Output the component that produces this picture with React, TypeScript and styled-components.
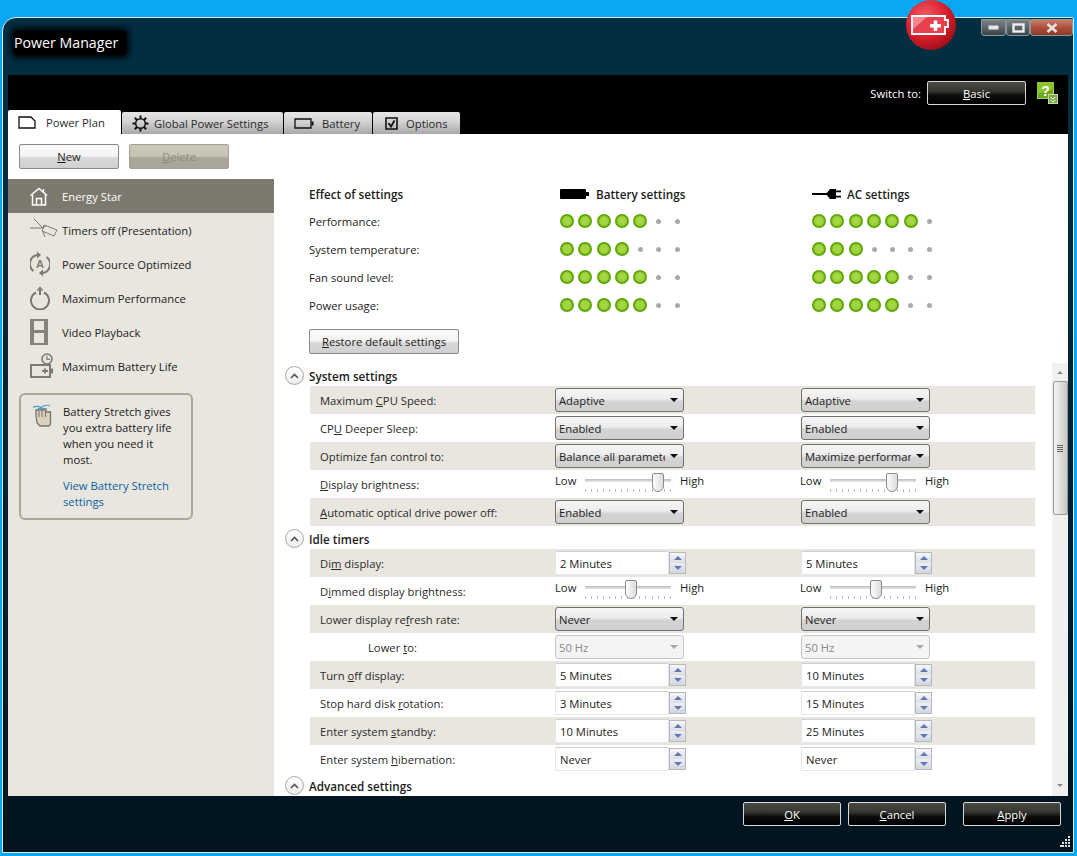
import { Fragment, ReactNode } from 'react'
import styled, { createGlobalStyle } from 'styled-components'

const GlobalStyle = createGlobalStyle`
  html, body {
    margin: 0;
    height: 100%;
    overflow: hidden;
    background: #08a8f2;
  }
  body {
    font-family: 'Open Sans', 'Noto Sans', sans-serif;
    font-size: 11.25px;
    color: #1c1c1c;
  }
  * {
    box-sizing: border-box;
  }
`

const Desktop = styled.div`
  width: 1077px;
  height: 856px;
  padding: 17px 3px 3px 2px;
  position: relative;
`

const Window = styled.div`
  height: 100%;
  display: flex;
  flex-direction: column;
  padding: 0 5px;
  border: 1px solid #dbe9ef;
  border-radius: 14px 2px 0 0;
  background: linear-gradient(#022e42 0, #022e42 58px, #02202f 62%, #02131d 100%);
`

const TitleBar = styled.div`
  height: 57px;
  flex: none;
  display: flex;
  justify-content: space-between;
  align-items: flex-start;
`

const Title = styled.div`
  margin: 13px 0 0 6px;
  font-size: 14.2px;
  line-height: 20px;
  color: #fff;
  background: #000;
  padding: 2px 8px 2px 0;
  box-shadow: 0 0 6px 3px #000;
  border-radius: 3px;
`

const Controls = styled.div`
  display: flex;
  margin: 1px -5px 0 0;
`

const ControlButton = styled.div<{ $close?: boolean; $w: number }>`
  width: ${(p) => p.$w}px;
  height: 17px;
  display: flex;
  align-items: center;
  justify-content: center;
  border: 1px solid #8b979d;
  border-radius: 0 0 3px 3px;
  background: ${(p) =>
    p.$close
      ? 'linear-gradient(#c77d6d 0, #b0503b 50%, #8c3a28 100%)'
      : 'linear-gradient(#7b8489 0, #5b6569 50%, #39444a 100%)'};
`

const Orb = styled.div`
  position: absolute;
  left: 906px;
  top: 0;
  width: 50px;
  height: 50px;
`

const BlackBand = styled.div`
  height: 59px;
  flex: none;
  background: #000;
  display: flex;
  flex-direction: column;
  justify-content: space-between;
`

const SwitchRow = styled.div`
  display: flex;
  align-items: center;
  justify-content: flex-end;
  padding: 6px 10px 0 0;
  color: #fff;
`

const SwitchLabel = styled.span`
  margin-right: 6px;
`

const DarkButton = styled.div<{ $gapLeft?: number; $w: number }>`
  width: ${(p) => p.$w}px;
  height: 24px;
  margin-left: ${(p) => p.$gapLeft ?? 0}px;
  display: flex;
  align-items: center;
  justify-content: center;
  color: #fff;
  border: 1px solid #d7d9da;
  border-radius: 2px;
  background: linear-gradient(#4a4a44 0, #383833 40%, #0b0b0a 62%, #000 100%);
`

const HelpIcon = styled.div`
  margin-left: 11px;
  width: 21px;
  height: 22px;
`

const TabRow = styled.div`
  display: flex;
  align-items: flex-end;
  height: 24px;
`

const Tab = styled.div<{ $active?: boolean; $w: number; $pad: number; $gap: number }>`
  width: ${(p) => p.$w}px;
  height: ${(p) => (p.$active ? 24 : 22)}px;
  margin-right: 1px;
  display: flex;
  align-items: center;
  gap: ${(p) => p.$gap}px;
  padding-left: ${(p) => p.$pad}px;
  color: #2b2b2b;
  background: ${(p) => (p.$active ? '#fff' : 'linear-gradient(#e6e6e6 0, #d2d2d2 45%, #a8a8a8 100%)')};
  border-radius: 2px 2px 0 0;
`

const Panel = styled.div`
  flex: 1;
  min-height: 0;
  background: #fff;
  display: flex;
  flex-direction: column;
  overflow: hidden;
`

const Toolbar = styled.div`
  height: 45px;
  flex: none;
  padding: 10px 0 0 11px;
  display: flex;
  gap: 10px;
`

const LightButton = styled.div<{ $w: number; $disabled?: boolean }>`
  width: ${(p) => p.$w}px;
  height: 25px;
  display: flex;
  align-items: center;
  justify-content: center;
  border: 1px solid ${(p) => (p.$disabled ? '#a5a294' : '#8a8a8a')};
  border-radius: 2px;
  color: ${(p) => (p.$disabled ? '#8c8a7e' : '#1c1c1c')};
  background: ${(p) =>
    p.$disabled
      ? 'linear-gradient(#cbc8ba 0, #c7c4b6 48%, #a9a699 56%, #a9a699 100%)'
      : 'linear-gradient(#fbfbfb 0, #f4f4f4 48%, #d8d8d8 56%, #d0d0d0 100%)'};
`

const PanelBody = styled.div`
  flex: 1;
  min-height: 0;
  display: grid;
  grid-template-columns: 266px 1fr;
`

const Sidebar = styled.div`
  background: #e9e6df;
`

const PlanItem = styled.div<{ $active?: boolean }>`
  height: 34px;
  display: flex;
  align-items: center;
  padding-left: 22px;
  background: ${(p) => (p.$active ? '#7c796e' : 'transparent')};
  color: ${(p) => (p.$active ? '#fff' : '#1c1c1c')};
`

const PlanIcon = styled.div`
  width: 32px;
  height: 30px;
  flex: none;
  display: flex;
  align-items: center;
`

const StretchCard = styled.div`
  margin: 10px 0 0 11px;
  width: 174px;
  height: 127px;
  border: 2px solid #aaa796;
  border-radius: 6px;
  padding: 9px 10px 0 12px;
  display: flex;
  gap: 10px;
  line-height: 16px;
`

const StretchIcon = styled.div`
  width: 20px;
  flex: none;
`

const StretchLink = styled.div`
  margin-top: 10px;
  color: #0b5fa5;
`

const Main = styled.div`
  display: flex;
  flex-direction: column;
  min-height: 0;
`

const Effects = styled.div`
  height: 184px;
  flex: none;
  padding: 1px 0 0 35px;
`

const EffectRow = styled.div<{ $head?: boolean }>`
  height: ${(p) => (p.$head ? 27 : 28)}px;
  display: grid;
  grid-template-columns: 251px 252px 1fr;
  align-items: center;
`

const EffectHead = styled.div`
  display: flex;
  align-items: center;
  gap: 6px;
  font-size: 11.7px;
  font-weight: 600;
`

const Dots = styled.div`
  display: flex;
  margin-left: -2px;
`

const DotCell = styled.div`
  width: 18.33px;
  height: 14px;
  display: flex;
  align-items: center;
  justify-content: center;
`

const Dot = styled.div<{ $on: boolean }>`
  width: ${(p) => (p.$on ? 14 : 5)}px;
  height: ${(p) => (p.$on ? 14 : 5)}px;
  border-radius: 50%;
  background: ${(p) =>
    p.$on ? 'radial-gradient(circle at 50% 50%, #a8d84a 0, #a0d23c 42%, #5fa806 58%, #529c00 82%, #8cc25a 100%)' : '#a9aaa8'};
`

const RestoreRow = styled.div`
  margin-top: 10px;
`

const ScrollArea = styled.div`
  flex: 1;
  min-height: 0;
  display: grid;
  grid-template-columns: 1fr 16px;
  overflow: hidden;
`

const SettingsList = styled.div`
  padding-left: 11px;
  overflow: hidden;
`

const SectionHead = styled.div`
  height: 23px;
  padding-top: 2px;
  display: flex;
  align-items: center;
  gap: 5px;
  font-size: 11.7px;
  font-weight: 600;
`

const CollapseIcon = styled.div`
  width: 19px;
  height: 19px;
  display: flex;
  align-items: center;
  justify-content: center;
  border: 1px solid #a8a8a8;
  border-radius: 50%;
  background: linear-gradient(#fff, #ececec);
`

const SettingRow = styled.div<{ $shade: boolean }>`
  margin: 0 0 0 25px;
  width: 725px;
  height: 28px;
  display: grid;
  grid-template-columns: 245px 246px 1fr;
  align-items: center;
  background: ${(p) => (p.$shade ? '#e9e6df' : 'transparent')};
`

const SettingLabel = styled.div<{ $indent?: boolean }>`
  padding-left: ${(p) => (p.$indent ? 58 : 10)}px;
  color: #2a2a2a;
`

const Select = styled.div<{ $disabled?: boolean }>`
  width: 129px;
  height: 24px;
  display: flex;
  align-items: center;
  padding: 0 5px 0 3px;
  border: 1px solid ${(p) => (p.$disabled ? '#c4c4c4' : '#70706c')};
  border-radius: 3px;
  color: ${(p) => (p.$disabled ? '#8a8a8a' : '#1c1c1c')};
  background: ${(p) => (p.$disabled ? '#f4f4f4' : 'linear-gradient(#f6f6f6 0, #ececec 45%, #d4d4d4 56%, #cfcfcf 100%)')};
`

const SelectText = styled.span`
  flex: 1;
  min-width: 0;
  overflow: hidden;
  white-space: nowrap;
`

const Caret = styled.span<{ $disabled?: boolean }>`
  flex: none;
  margin-left: 5px;
  width: 0;
  height: 0;
  border-left: 4px solid transparent;
  border-right: 4px solid transparent;
  border-top: 4px solid ${(p) => (p.$disabled ? '#a8a8a8' : '#111')};
`

const Spinner = styled.div`
  display: flex;
  height: 24px;
  width: 131px;
`

const SpinInput = styled.div`
  width: 114px;
  height: 24px;
  display: flex;
  align-items: center;
  padding-left: 4px;
  background: #fff;
  border: 1px solid #e3e6ea;
  border-top-color: #cdd0d4;
`

const SpinButtons = styled.div`
  width: 17px;
  display: flex;
  flex-direction: column;
  border: 1px solid #b4b8c0;
  height: 22px;
  margin-top: 1px;
`

const SpinPart = styled.div<{ $up?: boolean }>`
  flex: 1;
  display: flex;
  align-items: center;
  justify-content: center;
  background: ${(p) => (p.$up ? 'linear-gradient(#f6f6f8, #dcdee4)' : 'linear-gradient(#eceef2, #d4d6de)')};
  &::after {
    content: '';
    width: 0;
    height: 0;
    border-left: 4px solid transparent;
    border-right: 4px solid transparent;
    ${(p) => (p.$up ? 'border-bottom: 4px solid #6078b8;' : 'border-top: 4px solid #6078b8;')}
  }
`

const SliderWrap = styled.div<{ $shift?: boolean }>`
  display: flex;
  align-items: flex-start;
  height: 28px;
  padding-top: 3px;
  margin-left: ${(p) => (p.$shift ? -1 : 0)}px;
  line-height: 16px;
`

const SliderEnd = styled.span`
  width: 30px;
  flex: none;
`

const SliderTrack = styled.div`
  position: relative;
  width: 86px;
  height: 22px;
  margin-right: 9px;
`

const TrackLine = styled.div`
  position: absolute;
  top: 6px;
  left: 0;
  right: 0;
  height: 3px;
  background: linear-gradient(#bdbdbd, #e6e6e6);
`

const Ticks = styled.div`
  position: absolute;
  top: 16px;
  left: 0;
  right: 0;
  height: 3px;
  background: repeating-linear-gradient(to right, #b8b8b8 0 1px, transparent 1px 6.05px);
`

const Thumb = styled.div<{ $left: number }>`
  position: absolute;
  top: 0;
  left: ${(p) => p.$left}px;
  width: 12px;
  height: 19px;
  border: 1px solid #8c8c8c;
  border-radius: 2px 2px 6px 6px;
  background: linear-gradient(to right, #fdfdfd, #dcdcdc);
`

const Scrollbar = styled.div`
  background: #f0f0f0;
  display: flex;
  flex-direction: column;
  align-items: center;
  position: relative;
`

const ScrollArrow = styled.div<{ $down?: boolean }>`
  flex: none;
  height: 18px;
  display: flex;
  align-items: center;
  justify-content: center;
  margin-top: ${(p) => (p.$down ? 'auto' : '0')};
  padding-bottom: ${(p) => (p.$down ? '4px' : '0')};
  &::after {
    content: '';
    width: 0;
    height: 0;
    border-left: 3px solid transparent;
    border-right: 3px solid transparent;
    ${(p) => (p.$down ? 'border-top: 3px solid #8c8c8c;' : 'border-bottom: 3px solid #8c8c8c;')}
  }
`

const ScrollThumb = styled.div`
  width: 15px;
  height: 134px;
  flex: none;
  border: 1px solid #9a9a9a;
  border-radius: 2px;
  background: linear-gradient(to right, #f4f4f4, #dedede 50%, #c8c8c8);
  display: flex;
  flex-direction: column;
  align-items: center;
  justify-content: center;
  gap: 1px;
`

const GripLine = styled.div`
  width: 6px;
  height: 1px;
  background: #666;
`

const Footer = styled.div`
  height: 56px;
  flex: none;
  padding: 6px 7px 0 0;
  display: flex;
  justify-content: flex-end;
  position: relative;
`

const ResizeGrip = styled.div`
  position: absolute;
  right: -3px;
  bottom: 2px;
`

const Key = styled.span`
  text-decoration: underline;
`

type Setting =
  | { kind: 'select'; label: ReactNode; a: string; b: string; indent?: boolean; disabled?: boolean }
  | { kind: 'slider'; label: ReactNode; a: number; b: number }
  | { kind: 'spin'; label: ReactNode; a: string; b: string }

const systemSettings: Setting[] = [
  { kind: 'select', label: <>Maximum <Key>C</Key>PU Speed:</>, a: 'Adaptive', b: 'Adaptive' },
  { kind: 'select', label: <>CP<Key>U</Key> Deeper Sleep:</>, a: 'Enabled', b: 'Enabled' },
  { kind: 'select', label: <>Optimize <Key>f</Key>an control to:</>, a: 'Balance all parameters', b: 'Maximize performance' },
  { kind: 'slider', label: <><Key>D</Key>isplay brightness:</>, a: 67, b: 56 },
  { kind: 'select', label: <><Key>A</Key>utomatic optical drive power off:</>, a: 'Enabled', b: 'Enabled' },
]

const idleSettings: Setting[] = [
  { kind: 'spin', label: <>Di<Key>m</Key> display:</>, a: '2 Minutes', b: '5 Minutes' },
  { kind: 'slider', label: <>D<Key>i</Key>mmed display brightness:</>, a: 40, b: 40 },
  { kind: 'select', label: <>Lower display re<Key>f</Key>resh rate:</>, a: 'Never', b: 'Never' },
  { kind: 'select', label: <>Lower <Key>t</Key>o:</>, a: '50 Hz', b: '50 Hz', indent: true, disabled: true },
  { kind: 'spin', label: <>Turn <Key>o</Key>ff display:</>, a: '5 Minutes', b: '10 Minutes' },
  { kind: 'spin', label: <>Stop hard disk <Key>r</Key>otation:</>, a: '3 Minutes', b: '15 Minutes' },
  { kind: 'spin', label: <>Enter system <Key>s</Key>tandby:</>, a: '10 Minutes', b: '25 Minutes' },
  { kind: 'spin', label: <>Enter system <Key>h</Key>ibernation:</>, a: 'Never', b: 'Never' },
]

const effects = [
  { label: 'Performance:', battery: 5, ac: 6 },
  { label: 'System temperature:', battery: 4, ac: 3 },
  { label: 'Fan sound level:', battery: 5, ac: 5 },
  { label: 'Power usage:', battery: 5, ac: 5 },
]

const stroke = { fill: 'none', stroke: '#7d7a70', strokeWidth: 2 }

const plans: { name: string; icon: ReactNode }[] = [
  {
    name: 'Energy Star',
    icon: (
      <svg width="18" height="19" viewBox="0 0 18 19" fill="none" stroke="#fff" strokeWidth="1.5">
        <path d="M0.5 8.500 9 1.500l8 7" />
        <path d="M2.500 7.500V18h13V7.500" />
        <path d="M6.500 18v-6.500h5V18" />
        <path d="M13.500 2v3" />
      </svg>
    ),
  },
  {
    name: 'Timers off (Presentation)',
    icon: (
      <svg width="28" height="22" viewBox="0 0 28 22" fill="none" stroke="#7d7a70" strokeWidth="1">
        <path d="M0 9h11l5-2" />
        <path d="M4 0l10 10" />
        <path d="M14 6l13 5-3 6-12-5z" />
        <path d="M13 13l2 5" />
      </svg>
    ),
  },
  {
    name: 'Power Source Optimized',
    icon: (
      <svg width="20" height="26" viewBox="0 0 20 26">
        <path d="M7 4A9 9 0 0 0 3.500 20" {...stroke} />
        <path d="M13 22A9 9 0 0 0 16.500 6" {...stroke} />
        <path d="M7 0.500 11 4 7 7.500z" fill="#7d7a70" />
        <path d="M13 25.500 9 22l4-3.500z" fill="#7d7a70" />
        <text x="10" y="17" textAnchor="middle" fontSize="11" fontWeight="700" fill="#7d7a70" fontFamily="Liberation Sans, sans-serif">A</text>
      </svg>
    ),
  },
  {
    name: 'Maximum Performance',
    icon: (
      <svg width="20" height="24" viewBox="0 0 20 24">
        <path d="M6 6.500a9 9 0 1 0 8 0" {...stroke} />
        <path d="M10 9V4" {...stroke} />
        <path d="M6.500 4.500 10 0.500l3.500 4z" fill="#7d7a70" />
      </svg>
    ),
  },
  {
    name: 'Video Playback',
    icon: (
      <svg width="18" height="26" viewBox="0 0 18 26">
        <path d="M0 0h18v26H0z" fill="#85827a" />
        <path d="M4 2h10v9H4zM4 14h10v10H4z" fill="#e9e6df" />
      </svg>
    ),
  },
  {
    name: 'Maximum Battery Life',
    icon: (
      <svg width="24" height="26" viewBox="0 0 24 26">
        <path d="M1 12h19v12H1z" {...stroke} />
        <path d="M20.500 15.500h2.500v5h-2.500z" fill="#7d7a70" />
        <path d="M12 18h6M15 15.500v5" {...stroke} />
        <circle cx="17" cy="6" r="5" fill="#e9e6df" stroke="#7d7a70" strokeWidth="1.6" />
        <path d="M17 3v3.300h3" {...stroke} strokeWidth={1.2} />
      </svg>
    ),
  },
]

function DotRow({ on }: { on: number }) {
  return (
    <Dots>
      {Array.from({ length: 7 }, (_, i) => (
        <DotCell key={i}>
          <Dot $on={i < on} />
        </DotCell>
      ))}
    </Dots>
  )
}

function Slider({ value, shift }: { value: number; shift: boolean }) {
  return (
    <SliderWrap $shift={shift}>
      <SliderEnd>Low</SliderEnd>
      <SliderTrack>
        <TrackLine />
        <Ticks />
        <Thumb $left={value} />
      </SliderTrack>
      <SliderEnd>High</SliderEnd>
    </SliderWrap>
  )
}

function Drop({ value, disabled }: { value: string; disabled?: boolean }) {
  return (
    <Select $disabled={disabled}>
      <SelectText>{value}</SelectText>
      <Caret $disabled={disabled} />
    </Select>
  )
}

function Spin({ value }: { value: string }) {
  return (
    <Spinner>
      <SpinInput>{value}</SpinInput>
      <SpinButtons>
        <SpinPart $up />
        <SpinPart />
      </SpinButtons>
    </Spinner>
  )
}

function SettingCell({ setting, side }: { setting: Setting; side: 'a' | 'b' }) {
  if (setting.kind === 'slider') return <Slider value={setting[side]} shift={side === 'b'} />
  if (setting.kind === 'spin') return <Spin value={setting[side]} />
  return <Drop value={setting[side]} disabled={setting.disabled} />
}

function SectionTitle({ title }: { title: string }) {
  return (
    <SectionHead>
      <CollapseIcon>
        <svg width="9" height="6" viewBox="0 0 9 6" fill="none" stroke="#555" strokeWidth="1.6">
          <path d="M1 5 4.500 1.500 8 5" />
        </svg>
      </CollapseIcon>
      {title}
    </SectionHead>
  )
}

function Section({ title, settings }: { title: string; settings: Setting[] }) {
  return (
    <Fragment>
      <SectionTitle title={title} />
      {settings.map((s, i) => (
        <SettingRow key={i} $shade={i % 2 === 0}>
          <SettingLabel $indent={s.kind === 'select' && s.indent}>{s.label}</SettingLabel>
          <SettingCell setting={s} side="a" />
          <SettingCell setting={s} side="b" />
        </SettingRow>
      ))}
    </Fragment>
  )
}

export default function App() {
  return (
    <Desktop>
      <GlobalStyle />
      <Window>
        <TitleBar>
          <Title>Power Manager</Title>
          <Controls>
            <ControlButton $w={25}>
              <svg width="11" height="5"><rect x="0.5" y="0.5" width="10" height="4" fill="#e8e8e8" /></svg>
            </ControlButton>
            <ControlButton $w={24}>
              <svg width="13" height="10" fill="none"><rect x="1.500" y="1.500" width="10" height="7" stroke="#eee" strokeWidth="2.400" /></svg>
            </ControlButton>
            <ControlButton $w={43} $close>
              <svg width="12" height="10" fill="none" stroke="#e9e3e0" strokeWidth="2.600"><path d="M1.500 1 10.500 9M10.500 1 1.500 9" /></svg>
            </ControlButton>
          </Controls>
        </TitleBar>
        <BlackBand>
          <SwitchRow>
            <SwitchLabel>Switch to:</SwitchLabel>
            <DarkButton $w={99}><span><Key>B</Key>asic</span></DarkButton>
            <HelpIcon>
              <svg width="21" height="22" viewBox="0 0 21 22">
                <rect x="0.5" y="0.5" width="16" height="16" fill="#6fa816" stroke="#a8c880" />
                <path d="M0 0h17v7L0 12z" fill="#8fc32a" />
                <text x="8.500" y="14" textAnchor="middle" fontSize="14" fontWeight="700" fill="#fff" fontFamily="Liberation Sans, sans-serif">?</text>
                <rect x="11.500" y="12.500" width="9" height="9" fill="#7aa83a" stroke="#c8d8b0" />
                <path d="M13.500 15l2.500 2 2.500-2M13.500 18l2.500 2 2.500-2" fill="none" stroke="#fff" strokeWidth="1" />
              </svg>
            </HelpIcon>
          </SwitchRow>
          <TabRow>
            <Tab $active $w={113} $pad={10} $gap={10}>
              <svg width="18" height="13" viewBox="0 0 18 13" fill="none" stroke="#111" strokeWidth="1.300">
                <path d="M1 1h12l4 4v7H1z" />
              </svg>
              Power Plan
            </Tab>
            <Tab $w={161} $pad={10} $gap={5}>
              <svg width="17" height="17" viewBox="0 0 17 17" fill="none" stroke="#111">
                <circle cx="8.500" cy="8.500" r="4.800" strokeWidth="1.500" />
                <path d="M8.500 0.500v3M8.500 13.500v3M0.500 8.500h3M13.500 8.500h3M2.800 2.800l2.200 2.200M12 12l2.200 2.200M2.800 14.200 5 12M12 5l2.200-2.200" strokeWidth="2" />
              </svg>
              Global Power Settings
            </Tab>
            <Tab $w={88} $pad={10} $gap={8}>
              <svg width="20" height="11" viewBox="0 0 20 11" fill="none" stroke="#111" strokeWidth="1.300">
                <path d="M1 1h16v9H1z" />
                <path d="M18.500 3.500v4" strokeWidth="2" />
              </svg>
              Battery
            </Tab>
            <Tab $w={87} $pad={12} $gap={8}>
              <svg width="13" height="13" viewBox="0 0 13 13" fill="none" stroke="#111">
                <path d="M1 1h11v11H1z" strokeWidth="1.600" />
                <path d="M3.500 6 6 9.500l3.500-6" strokeWidth="1.800" />
              </svg>
              Options
            </Tab>
          </TabRow>
        </BlackBand>
        <Panel>
          <Toolbar>
            <LightButton $w={100}><span><Key>N</Key>ew</span></LightButton>
            <LightButton $w={100} $disabled><span><Key>D</Key>elete</span></LightButton>
          </Toolbar>
          <PanelBody>
            <Sidebar>
              {plans.map((p, i) => (
                <PlanItem key={p.name} $active={i === 0}>
                  <PlanIcon>{p.icon}</PlanIcon>
                  {p.name}
                </PlanItem>
              ))}
              <StretchCard>
                <StretchIcon>
                  <svg width="20" height="25" viewBox="0 0 20 25">
                    <path d="M3 12V6h2.500v-1h2.500v1h2.500v-1h2.500v3h4.500v12l-1.500 2H7l-3-3z" fill="#d8d0b8" stroke="#77746a" strokeWidth="1.300" />
                    <path d="M6 6v7M9 6v7M12.500 7v6" stroke="#77746a" strokeWidth="1" />
                    <path d="M0 3.500c3-2 6-1 8 0 2-2 7-3 9-1.500M8 3.500l-4 3M8 3.500l4 3" fill="none" stroke="#4a9ccc" strokeWidth="1.100" />
                  </svg>
                </StretchIcon>
                <div>
                  Battery Stretch gives you extra battery life when you need it most.
                  <StretchLink>View Battery Stretch settings</StretchLink>
                </div>
              </StretchCard>
            </Sidebar>
            <Main>
              <Effects>
                <EffectRow $head>
                  <EffectHead>Effect of settings</EffectHead>
                  <EffectHead>
                    <svg width="30" height="10" viewBox="0 0 30 10">
                      <path d="M1 0h24q1 0 1 1v8q0 1-1 1H1q-1 0-1-1V1q0-1 1-1zM26 3h3v4h-3z" fill="#000" />
                    </svg>
                    Battery settings
                  </EffectHead>
                  <EffectHead>
                    <svg width="29" height="12" viewBox="0 0 29 12">
                      <path d="M0 5h15v2H0zM14 6l4-5h6v10h-6zM24 2.500h5v1.800h-5zM24 7.700h5v1.800h-5z" fill="#000" />
                    </svg>
                    AC settings
                  </EffectHead>
                </EffectRow>
                {effects.map((e) => (
                  <EffectRow key={e.label}>
                    <span>{e.label}</span>
                    <DotRow on={e.battery} />
                    <DotRow on={e.ac} />
                  </EffectRow>
                ))}
                <RestoreRow>
                  <LightButton $w={150}><span><Key>R</Key>estore default settings</span></LightButton>
                </RestoreRow>
              </Effects>
              <ScrollArea>
                <SettingsList>
                  <Section title="System settings" settings={systemSettings} />
                  <Section title="Idle timers" settings={idleSettings} />
                  <SectionTitle title="Advanced settings" />
                </SettingsList>
                <Scrollbar>
                  <ScrollArrow />
                  <ScrollThumb>
                    <GripLine />
                    <GripLine />
                    <GripLine />
                    <GripLine />
                  </ScrollThumb>
                  <ScrollArrow $down />
                </Scrollbar>
              </ScrollArea>
            </Main>
          </PanelBody>
        </Panel>
        <Footer>
          <DarkButton $w={98}><span><Key>O</Key>K</span></DarkButton>
          <DarkButton $w={98} $gapLeft={7}><span><Key>C</Key>ancel</span></DarkButton>
          <DarkButton $w={98} $gapLeft={17}><span><Key>A</Key>pply</span></DarkButton>
          <ResizeGrip>
            <svg width="11" height="11" fill="#d8e0e4">
              {[[8, 0], [8, 3], [5, 3], [8, 6], [5, 6], [2, 6], [8, 9], [5, 9], [2, 9], [0, 9]].map(([x, y]) => (
                <rect key={`${x}-${y}`} x={x} y={y} width="2" height="2" />
              ))}
            </svg>
          </ResizeGrip>
        </Footer>
      </Window>
      <Orb>
        <svg width="50" height="50" viewBox="0 0 50 50">
          <defs>
            <radialGradient id="orbFill" cx="0.38" cy="0.32" r="0.78">
              <stop offset="0" stopColor="#f05a66" />
              <stop offset="0.55" stopColor="#d8202c" />
              <stop offset="1" stopColor="#900c14" />
            </radialGradient>
          </defs>
          <circle cx="25" cy="25" r="25" fill="url(#orbFill)" />
          <path d="M6 16h33v4h3v7h-3v7H6z" fill="#e8404c" />
          <path d="M6 30 22 16H6z" fill="#f4868e" />
          <path d="M6 16h33v4h3v7h-3v7H6z" fill="none" stroke="#fff" strokeWidth="1.800" />
          <path d="M24 24h11v3.500H24zM27.700 20.500h3.600v10.500h-3.600z" fill="#fff" />
        </svg>
      </Orb>
    </Desktop>
  )
}
